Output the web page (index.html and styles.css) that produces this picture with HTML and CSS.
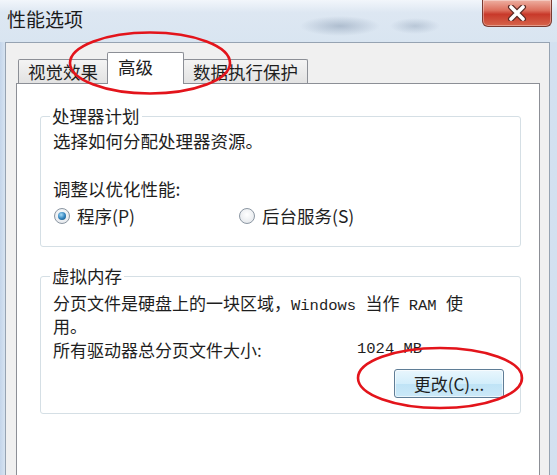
FILE: index.html
```html
<!doctype html>
<html lang="zh-CN">
  <head>
    <meta charset="UTF-8" />
    <title>性能选项</title>
    <link rel="stylesheet" href="styles.css">
  </head>
  <body>
    <div class="window">
      <!-- タイトルバー -->
      <div class="titlebar">
        <div class="title">性能选项</div>
        <div class="close-button">
          <svg width="26" height="16" viewBox="0 0 26 16">
            <path d="M7 2 L19 14 M19 2 L7 14" stroke="#5a2a24" stroke-width="6" stroke-linecap="round" />
            <path d="M7 2 L19 14 M19 2 L7 14" stroke="#ffffff" stroke-width="3.6" stroke-linecap="round" />
          </svg>
        </div>
      </div>

      <div class="dialog">
        <!-- タブ -->
        <div class="tabs">
          <div class="tab">视觉效果</div>
          <div class="tab active">高级</div>
          <div class="tab">数据执行保护</div>
        </div>

        <div class="panel">
          <fieldset class="group group-cpu">
            <legend>处理器计划</legend>
            <div class="line first">选择如何分配处理器资源。</div>
            <div class="line gap">调整以优化性能:</div>
            <div class="radio-row">
              <label class="option">
                <span class="radio checked"></span>
                <span>程序(P)</span>
              </label>
              <label class="option">
                <span class="radio"></span>
                <span>后台服务(S)</span>
              </label>
            </div>
          </fieldset>

          <fieldset class="group group-memory">
            <legend>虚拟内存</legend>
            <div class="para">分页文件是硬盘上的一块区域，<span class="mono">Windows </span>当作<span class="mono"> RAM </span>使</div>
            <div class="para">用。</div>
            <div class="size-row">
              <span class="size-label">所有驱动器总分页文件大小:</span>
              <span class="mono">1024 MB</span>
            </div>
            <div class="button-row">
              <button class="change-button">更改(C)...</button>
            </div>
          </fieldset>
        </div>
      </div>

      <!-- 赤丸の注釈 -->
      <svg class="marks" width="557" height="475" viewBox="0 0 557 475">
        <ellipse cx="150" cy="63" rx="80" ry="30.5" fill="none" stroke="#e3141b" stroke-width="2.6" />
        <ellipse cx="440" cy="378" rx="82" ry="30" fill="none" stroke="#e3141b" stroke-width="2.6" />
      </svg>
    </div>
  </body>
</html>
```

FILE: styles.css
```css
* {
  margin: 0;
  padding: 0;
  box-sizing: border-box;
}

body {
  font-family: 'Noto Sans CJK SC', 'Noto Sans', sans-serif;
  background: #c9d9ec;
  color: #1e1e1e;
  width: 557px;
  height: 475px;
  overflow: hidden;
}

.window {
  position: relative;
  height: 475px;
  background: linear-gradient(90deg, #c4d5ea 0, #d6e3f1 5px, #dde7f2 50%, #d3e1f0 100%);
}

/* タイトルバー */
.titlebar {
  height: 42px;
  display: flex;
  justify-content: space-between;
  align-items: flex-start;
  background:
    radial-gradient(ellipse 40px 10px at 340px 26px, rgba(120, 140, 165, 0.45), transparent),
    radial-gradient(ellipse 25px 8px at 415px 26px, rgba(120, 140, 165, 0.35), transparent),
    linear-gradient(#f2f6fb, #dde7f2 30%, #d9e5f1);
}

.title {
  padding: 6px 0 0 7px;
  font-size: 19px;
  line-height: 26px;
  color: #1a1a1a;
}

.close-button {
  width: 70px;
  height: 27px;
  margin-right: 5px;
  border: 1px solid #7a3b31;
  border-top: none;
  border-radius: 0 0 6px 6px;
  background: linear-gradient(#eeb0a2, #dc6e5c 40%, #c8392a 55%, #d6654b 100%);
  box-shadow: inset 0 0 0 1px rgba(255, 255, 255, 0.35);
  display: flex;
  align-items: center;
  justify-content: center;
}

/* ダイアログ本体 */
.dialog {
  margin: 0 7px 0 5px;
  height: 433px;
  background: #f0f0f0;
  border: 1px solid #96a3b2;
  border-bottom: none;
  padding: 9px 9px 0 10px;
}

.tabs {
  display: flex;
  align-items: flex-end;
  height: 31px;
  padding-left: 2px;
  position: relative;
  z-index: 1;
}

.tab {
  height: 24px;
  padding: 0 9px;
  border: 1px solid #8c8f96;
  border-bottom: none;
  border-radius: 2px 2px 0 0;
  background: linear-gradient(#f4f4f4, #e2e2e2);
  font-size: 17.5px;
  line-height: 24px;
  white-space: nowrap;
}

.tab + .tab {
  margin-left: -1px;
}

.tab.active {
  width: 77px;
  height: 32px;
  margin: 0 -1px -1px -1px;
  padding: 0 0 0 10px;
  background: #fff;
  line-height: 28px;
  position: relative;
  z-index: 2;
}

.tab.active + .tab {
  margin-left: 0;
}

.panel {
  height: 392px;
  background: #fff;
  border: 1px solid #8c8f96;
  border-bottom: none;
  padding: 21px 18px 0 23px;
}

/* グループ */
.group {
  border: 1px solid #d5dfe5;
  border-radius: 3px;
  padding: 0 12px;
}

.group legend {
  font-size: 17.5px;
  line-height: 22px;
  padding: 0 2px;
  margin-left: -3px;
}

.group-cpu {
  padding-bottom: 19px;
}

.group-memory {
  margin-top: 18px;
  padding-right: 16px;
  padding-bottom: 15px;
}

.line {
  font-size: 17.5px;
  line-height: 22px;
}

.line.first {
  margin-top: 3px;
}

.line.gap {
  margin-top: 26px;
}

.radio-row {
  display: flex;
  margin-top: 5px;
  height: 22px;
}

.option {
  display: flex;
  align-items: center;
  gap: 7px;
  font-size: 17.5px;
  line-height: 22px;
}

.option:first-child {
  width: 186px;
  padding-left: 1px;
}

.radio {
  width: 16px;
  height: 16px;
  border-radius: 50%;
  border: 1px solid #8b96a2;
  background: radial-gradient(circle at 50% 40%, #ffffff, #dfe3e8);
  display: flex;
  align-items: center;
  justify-content: center;
}

.radio.checked::after {
  content: '';
  width: 8px;
  height: 8px;
  border-radius: 50%;
  background: radial-gradient(circle at 40% 35%, #a6dcf8, #2f80bb 55%, #17496f);
}

.para {
  font-size: 17px;
  line-height: 19px;
  white-space: nowrap;
}

.para:first-of-type {
  margin-top: 6px;
}

.mono {
  font-family: 'Liberation Mono', 'DejaVu Sans Mono', monospace;
  font-size: 15.5px;
  white-space: pre;
}

.size-row {
  display: flex;
  align-items: center;
  margin-top: 5px;
  height: 19px;
  font-size: 17px;
  line-height: 19px;
}

.size-label {
  width: 304px;
}

.button-row {
  display: flex;
  justify-content: flex-end;
  margin-top: 10px;
}

.change-button {
  width: 110px;
  height: 29px;
  border: 1px solid #5f7d96;
  border-radius: 3px;
  background: linear-gradient(#e9f6fd, #d3eefb 50%, #bfe3f6 51%, #cbe9f8);
  box-shadow: inset 0 0 0 1px rgba(255, 255, 255, 0.6);
  font-family: 'Noto Sans CJK SC', sans-serif;
  font-size: 17px;
  color: #1e1e1e;
}

/* 注釈 */
.marks {
  position: absolute;
  left: 0;
  top: 0;
  pointer-events: none;
  z-index: 5;
}
```
